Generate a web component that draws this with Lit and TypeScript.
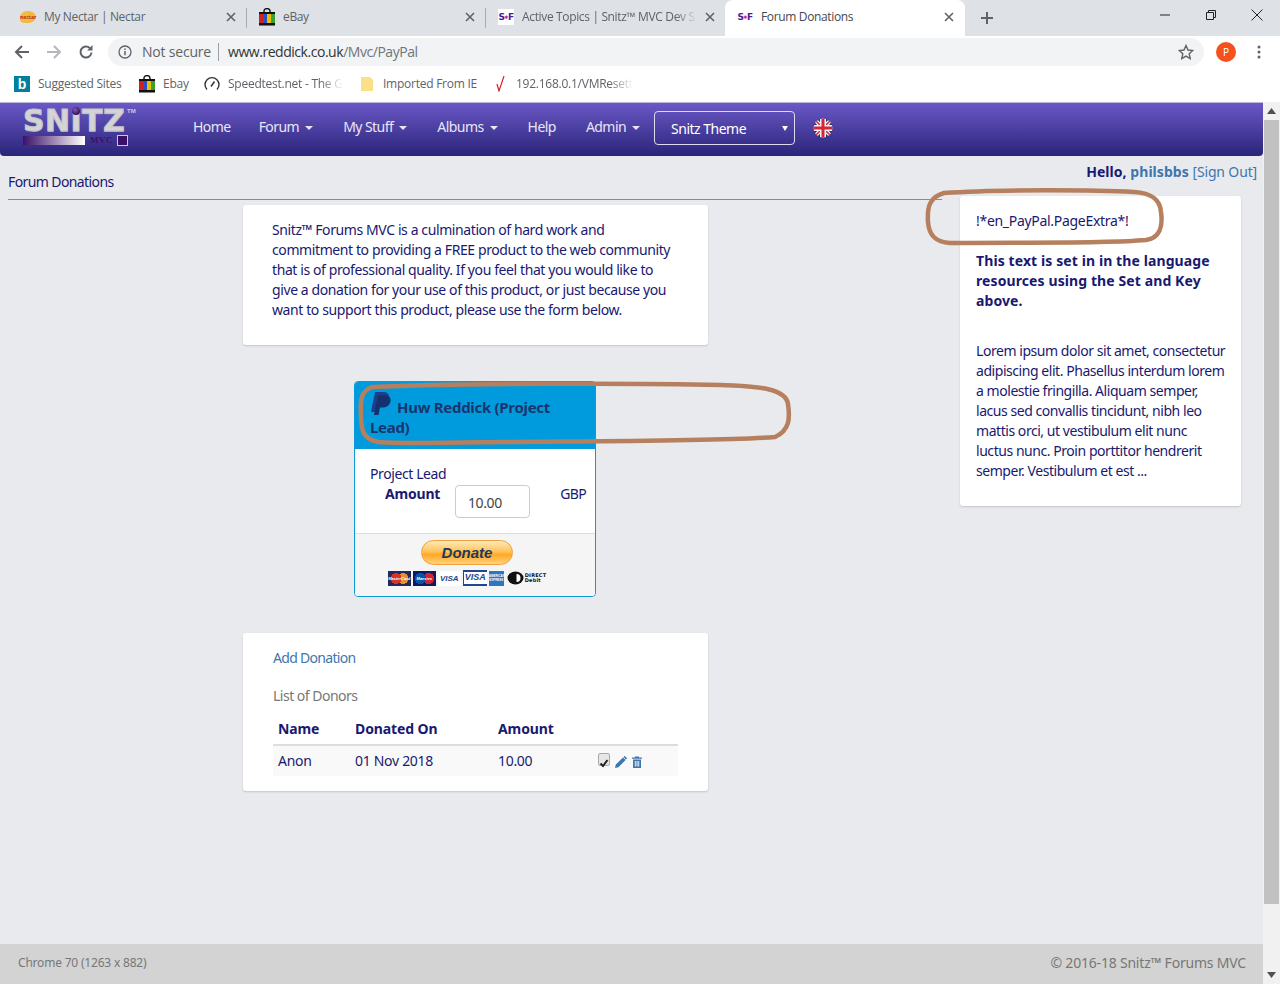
import { LitElement, css, html, svg } from 'lit';
import { customElement } from 'lit/decorators.js';

const closeIcon = html`<svg class="tab-x" width="10" height="10" viewBox="0 0 10 10"><path d="M1 1l8 8M9 1l-8 8" stroke="#5f6368" stroke-width="1.6"/></svg>`;

const bagIcon = html`<svg width="16" height="18" viewBox="0 0 16 18">
  <path d="M5 5V3a3 2.4 0 0 1 6 0v2" fill="none" stroke="#111" stroke-width="1.4"/>
  <rect x="0" y="4" width="16" height="2.5" fill="#111"/>
  <rect x="0" y="6" width="5" height="9" fill="#d02020"/>
  <rect x="5" y="6" width="3" height="9" fill="#2a4fc0"/>
  <rect x="8" y="6" width="4" height="9" fill="#e8c000"/>
  <rect x="12" y="6" width="4" height="9" fill="#3aa030"/>
  <rect x="0" y="15" width="16" height="2.5" fill="#111"/>
</svg>`;

const snitzFavicon = html`<span class="sf-icon">S<i>✱</i>F</span>`;

@customElement('browser-chrome')
export class BrowserChrome extends LitElement {
  static styles = css`
    :host {
      display: block;
      font-family: "Open Sans", "Noto Sans", sans-serif;
      font-size: 12px;
      color: #5f6368;
    }
    .strip {
      height: 36px;
      background: #dee1e6;
      display: flex;
      align-items: center;
      padding-left: 8px;
    }
    .tab {
      width: 238px;
      height: 36px;
      box-sizing: border-box;
      display: flex;
      align-items: center;
      padding: 0 10px 2px 12px;
      gap: 8px;
      flex: none;
    }
    .sep { width: 1px; height: 20px; background: #a8abb0; flex: none; margin-bottom: 1px; }
    .tab.wide { width: 239px; }
    .tab.active {
      width: 240px;
      padding-right: 11px;
      background: #fff;
      border-radius: 8px 8px 0 0;
      color: #45484c;
    }
    .tab .ico { width: 16px; display: flex; justify-content: center; align-items: center; flex: none; }
    .tab .name { flex: 1; white-space: nowrap; overflow: hidden; letter-spacing: -0.35px; }
    .tab .name.fade {
      -webkit-mask-image: linear-gradient(90deg, #000 88%, transparent);
      mask-image: linear-gradient(90deg, #000 88%, transparent);
    }
    .tab-x { flex: none; }
    .nectar {
      width: 16px;
      height: 12px;
      border-radius: 50% 50% 50% 30%;
      background: #f3b83e;
      color: #b5301a;
      font-size: 5px;
      font-weight: 700;
      line-height: 12px;
      text-align: center;
    }
    .sf-icon {
      font-family: "DejaVu Sans", sans-serif;
      font-size: 9px;
      font-weight: 700;
      color: #4a1d96;
      background: #fff;
      width: 16px;
      text-align: center;
      line-height: 16px;
      letter-spacing: -0.6px;
      white-space: nowrap;
    }
    .sf-icon i { font-style: normal; font-size: 5px; color: #c02090; vertical-align: 1px; }
    .plus { margin-left: 15px; height: 14px; flex: none; }
    .win {
      margin-left: auto;
      display: flex;
      height: 30px;
      align-self: flex-start;
    }
    .win span {
      width: 46px;
      display: flex;
      align-items: center;
      justify-content: center;
    }
    .toolbar {
      height: 30px;
      box-sizing: border-box;
      padding-top: 2px;
      background: #fff;
      display: flex;
      align-items: center;
    }
    .nav-btn { width: 16px; height: 16px; flex: none; }
    .nav-group { display: flex; gap: 16px; padding-left: 14px; width: 94px; flex: none; }
    .omni {
      width: 1096px;
      height: 28px;
      box-sizing: border-box;
      background: #f1f3f4;
      border-radius: 14px;
      display: flex;
      align-items: center;
      padding: 0 10px;
      font-size: 14px;
      flex: none;
    }
    .secure { margin-left: 10px; letter-spacing: -0.2px; }
    .divider { width: 1px; height: 18px; background: #9aa0a6; margin: 0 9px 0 7px; }
    .host { color: #333; letter-spacing: -0.46px; }
    .path { color: #70757a; letter-spacing: -0.46px; }
    .star { margin-left: auto; }
    .avatar {
      width: 20px;
      height: 20px;
      border-radius: 50%;
      background: #f4511e;
      color: #fff;
      font-size: 10px;
      line-height: 20px;
      text-align: center;
      margin-left: 12px;
      flex: none;
    }
    .dots { margin-left: 21px; flex: none; }
    .bookmarks {
      height: 36px;
      background: #fff;
      display: flex;
      align-items: center;
      padding-left: 14px;
      box-sizing: border-box;
    }
    .bm { display: flex; align-items: center; white-space: nowrap; flex: none; }
    .bm .ico { width: 16px; height: 16px; display: flex; justify-content: center; align-items: center; flex: none; }
    .bm .lbl { margin-left: 8px; letter-spacing: -0.25px; }
    .w-suggested { width: 125px; }
    .w-ebay { width: 65px; }
    .w-speed { width: 155px; }
    .w-imported { width: 134px; }
    .lbl.imported { margin-left: 8px; }
    .lbl.ip { margin-left: 7px; }
    .bing {
      background: #00809d;
      color: #fff;
      font: 700 14px/16px "Liberation Sans", sans-serif;
      text-align: center;
    }
    .fade-short {
      -webkit-mask-image: linear-gradient(90deg, #000 80%, transparent);
      mask-image: linear-gradient(90deg, #000 80%, transparent);
    }
  `;

  render() {
    return html`
      <div class="strip">
        <div class="tab">
          <span class="ico"><span class="nectar">nectar</span></span>
          <span class="name">My Nectar | Nectar</span>${closeIcon}
        </div>
        <span class="sep"></span>
        <div class="tab">
          <span class="ico">${bagIcon}</span>
          <span class="name">eBay</span>${closeIcon}
        </div>
        <span class="sep"></span>
        <div class="tab wide">
          <span class="ico">${snitzFavicon}</span>
          <span class="name fade">Active Topics | Snitz™ MVC Dev S</span>${closeIcon}
        </div>
        <div class="tab active">
          <span class="ico">${snitzFavicon}</span>
          <span class="name">Forum Donations</span>${closeIcon}
        </div>
        <svg class="plus" width="14" height="14" viewBox="0 0 14 14"><path d="M7 1v12M1 7h12" stroke="#5f6368" stroke-width="2"/></svg>
        <div class="win">
          <span><svg width="10" height="10" viewBox="0 0 10 10"><path d="M0 5h10" stroke="#222" stroke-width="1"/></svg></span>
          <span><svg width="10" height="10" viewBox="0 0 10 10"><path d="M.5 2.5h7v7h-7zM2.5 2.5v-2h7v7h-2" fill="none" stroke="#222"/></svg></span>
          <span><svg width="12" height="12" viewBox="0 0 12 12"><path d="M.5.5l11 11M11.500.5l-11 11" stroke="#222"/></svg></span>
        </div>
      </div>
      <div class="toolbar">
        <div class="nav-group">
          <svg class="nav-btn" viewBox="0 0 16 16"><path d="M15 8H2M8 2L2 8l6 6" fill="none" stroke="#5f6368" stroke-width="2"/></svg>
          <svg class="nav-btn" viewBox="0 0 16 16"><path d="M1 8h13M8 2l6 6-6 6" fill="none" stroke="#b4b7bb" stroke-width="2"/></svg>
          <svg class="nav-btn" viewBox="0 0 16 16"><path d="M13.500 8.500a5.500 5.500 0 1 1-1.600-4.400" fill="none" stroke="#5f6368" stroke-width="2"/><path d="M14.500 1v5.500H9z" fill="#5f6368"/></svg>
        </div>
        <div class="omni">
          <svg width="14" height="14" viewBox="0 0 14 14"><circle cx="7" cy="7" r="6" fill="none" stroke="#5f6368" stroke-width="1.300"/><path d="M7 6v4.200M7 3.500v1.500" stroke="#5f6368" stroke-width="1.500"/></svg>
          <span class="secure">Not secure</span>
          <span class="divider"></span>
          <span class="host">www.reddick.co.uk</span><span class="path">/Mvc/PayPal</span>
          <svg class="star" width="16" height="16" viewBox="0 0 16 16"><path d="M8 1.500l2 4.500 4.800.5-3.600 3.200 1 4.800L8 12.100l-4.200 2.400 1-4.800L1.200 6.500 6 6z" fill="none" stroke="#5f6368" stroke-width="1.400"/></svg>
        </div>
        <span class="avatar">P</span>
        <svg class="dots" width="4" height="14" viewBox="0 0 4 14"><circle cx="2" cy="2" r="1.500" fill="#5f6368"/><circle cx="2" cy="7" r="1.500" fill="#5f6368"/><circle cx="2" cy="12" r="1.500" fill="#5f6368"/></svg>
      </div>
      <div class="bookmarks">
        <div class="bm w-suggested"><span class="ico bing">b</span><span class="lbl">Suggested Sites</span></div>
        <div class="bm w-ebay"><span class="ico">${bagIcon}</span><span class="lbl">Ebay</span></div>
        <div class="bm w-speed">
          <span class="ico"><svg width="16" height="16" viewBox="0 0 16 16"><path d="M3 13.500a7 7 0 1 1 10 0" fill="none" stroke="#333" stroke-width="1.400"/><path d="M7 10.500l3.500-5" stroke="#333" stroke-width="1.500"/></svg></span>
          <span class="lbl fade-short">Speedtest.net - The G</span>
        </div>
        <div class="bm w-imported">
          <span class="ico"><svg width="12" height="14" viewBox="0 0 12 14"><path d="M0 0h9l3 3v11H0z" fill="#fbe08a"/></svg></span>
          <span class="lbl imported">Imported From IE</span>
        </div>
        <div class="bm">
          <span class="ico"><svg width="12" height="16" viewBox="0 0 12 16"><path d="M2 8l2 7 5-15" fill="none" stroke="#d8222a" stroke-width="1.200"/></svg></span>
          <span class="lbl ip fade-short">192.168.0.1/VMResett</span>
        </div>
      </div>
    `;
  }
}

const marks = svg`
  <path d="M944 193C1000 189 1100 190 1134 192C1150 193 1160 198 1161 212C1163 226 1160 238 1146 240C1100 244 1000 242 950 243C936 242 929 236 928 222C927 206 930 197 944 193Z"/>
  <path d="M372 387C460 383 640 383 720 385C760 386 786 389 788 404C790 418 790 430 775 437C720 441 600 441 500 442C440 443 400 444 378 442C364 439 361 432 361 415C360 400 361 391 372 387Z"/>
`;

@customElement('app-root')
export class AppRoot extends LitElement {
  static styles = css`
    :host {
      display: block;
      position: relative;
      width: 1280px;
      height: 984px;
      overflow: hidden;
      font-family: "Noto Sans", "DejaVu Sans", sans-serif;
      font-size: 14px;
      line-height: 20px;
      color: #191970;
      background: #e9eaee;
    }
    .page { display: flex; height: 882px; }
    .content { width: 1263px; display: flex; flex-direction: column; }
    .scrollbar {
      width: 17px;
      background: #f1f1f1;
      display: flex;
      flex-direction: column;
      align-items: center;
    }
    .scrollbar .arrow { height: 18px; display: flex; align-items: center; justify-content: center; flex: none; }
    .scrollbar .thumb { width: 15px; flex: 1; background: #c1c1c1; margin-bottom: 62px; }
    .navbar {
      height: 54px;
      flex: none;
      border-top: 1px solid #b9b7d6;
      box-sizing: border-box;
      background: linear-gradient(#6a58c6, #2a2479);
      border-radius: 0 0 4px 4px;
      display: flex;
      align-items: center;
      padding-bottom: 4px;
      color: #e8e6f6;
    }
    .logo {
      width: 178px;
      padding-left: 23px;
      height: 46px;
      box-sizing: border-box;
      flex: none;
      position: relative;
      margin-top: 4px;
    }
    .logo-word {
      font: 700 30px/28px "DejaVu Sans", sans-serif;
      letter-spacing: 0.4px;
      color: #d4d4d6;
      -webkit-text-stroke: 1px #c4c4c8;
      text-shadow: 0 1px 0 #8f8fa0;
      display: block;
      height: 28px;
      margin-bottom: 1px;
    }
    .logo-dot {
      position: absolute;
      left: 72px;
      top: 0;
      width: 8px;
      height: 8px;
      border-radius: 50%;
      background: radial-gradient(circle at 40% 35%, #8a5ab0, #34105c 70%);
    }
    .logo-tm { position: absolute; left: 127px; top: 0; font: 700 6px/8px "Liberation Sans", sans-serif; color: #ccc; }
    .logo-bar { display: flex; align-items: center; width: 104px; height: 9px; }
    .logo-fade { width: 62px; height: 9px; background: linear-gradient(90deg, #3c1068, #fff); }
    .logo-mvc { flex: 1; text-align: center; font: 700 9px/9px "Liberation Serif", serif; color: #3c1068; letter-spacing: 0.5px; }
    .logo-sq { width: 9px; height: 9px; background: #3c1068; outline: 1px solid #c8c8d8; }
    .menu { display: flex; margin-bottom: 2px; }
    .menu a { padding: 0 15px; white-space: nowrap; letter-spacing: -0.55px; }
    .menu a.home { padding-right: 13px; }
    .menu a.drop::after {
      content: "";
      display: inline-block;
      margin-left: 6px;
      vertical-align: 2px;
      border-top: 4px solid #e8e6f6;
      border-left: 4px solid transparent;
      border-right: 4px solid transparent;
    }
    .theme {
      width: 141px;
      height: 34px;
      margin-left: -1px;
      box-sizing: border-box;
      border: 1px solid #dcdaf0;
      border-radius: 4px;
      display: flex;
      align-items: center;
      justify-content: space-between;
      padding: 2px 6px 0 16px;
      color: #fff;
      letter-spacing: -0.5px;
      flex: none;
    }
    .theme::after {
      content: "";
      border-top: 5px solid #fff;
      border-left: 3px solid transparent;
      border-right: 3px solid transparent;
    }
    .flag { margin-left: 18px; flex: none; }
    .main { flex: 1; display: grid; grid-template-columns: 942px 321px; }
    .left { padding: 16px 0 0 8px; display: flex; flex-direction: column; }
    .crumb { letter-spacing: -0.6px; height: 20px; }
    .rule { height: 1px; background: #8b8b8f; margin-top: 7px; flex: none; }
    .stack {
      margin-top: 5px;
      display: flex;
      flex-direction: column;
      align-items: center;
      gap: 36px;
    }
    .card {
      background: #fff;
      border-radius: 3px;
      box-shadow: 0 1px 2px rgba(0, 0, 0, 0.16);
      box-sizing: border-box;
    }
    .intro { width: 465px; margin-left: 1px; height: 140px; padding: 15px 30px 25px 29px; letter-spacing: -0.4px; white-space: nowrap; }
    .paypal {
      width: 242px;
      height: 216px;
      border: 1px solid #0d9ad6;
      border-radius: 4px;
      overflow: hidden;
      background: #fff;
      box-sizing: border-box;
      display: flex;
      flex-direction: column;
    }
    .pp-head {
      height: 67px;
      flex: none;
      background: #009bdd;
      padding: 10px 15px 0;
      box-sizing: border-box;
      color: #19346e;
      font-weight: 700;
      font-size: 15px;
      letter-spacing: -0.3px;
      white-space: nowrap;
    }
    .pp-logo { vertical-align: -3px; margin-right: 5px; }
    .pp-body { flex: 1; padding: 15px 9px 0 15px; letter-spacing: -0.4px; }
    .pp-row { display: flex; }
    .pp-amount { font-weight: 700; width: 85px; padding-left: 15px; box-sizing: border-box; letter-spacing: -0.2px; }
    .pp-input {
      width: 75px;
      height: 33px;
      margin-top: 1px;
      box-sizing: border-box;
      border: 1px solid #ccc;
      border-radius: 4px;
      padding: 7px 12px 0;
      color: #444;
      flex: none;
    }
    .pp-gbp { margin-left: auto; letter-spacing: -0.7px; }
    .pp-foot {
      height: 63px;
      flex: none;
      box-sizing: border-box;
      background: #f5f5f5;
      border-top: 1px solid #ddd;
      display: flex;
      flex-direction: column;
      align-items: center;
      padding-top: 6px;
    }
    .donate {
      width: 92px;
      height: 25px;
      margin-left: -16px;
      box-sizing: border-box;
      border: 1px solid #f0a13c;
      border-radius: 13px;
      background: linear-gradient(#ffe9b8 0%, #ffc45c 45%, #ffa928 60%, #ffd27d 100%);
      text-align: center;
      font: italic 700 15px/23px "Liberation Sans", sans-serif;
      color: #1c3a5c;
    }
    .cards { display: flex; align-items: center; gap: 2px; margin-top: 5px; margin-left: -16px; height: 16px; }
    .pc {
      height: 15px;
      width: 23px;
      font: italic 700 5px/15px "Liberation Sans", sans-serif;
      text-align: center;
      white-space: nowrap;
      overflow: hidden;
      color: #fff;
    }
    .pc.mc { background: radial-gradient(circle at 35% 50%, #d0342c 0 32%, transparent 33%), radial-gradient(circle at 65% 50%, #e88f2e 0 32%, transparent 33%), #1f2a5c; font-size: 4px; }
    .pc.ma { background: radial-gradient(circle at 32% 50%, #0a54a8 0 32%, transparent 33%), radial-gradient(circle at 68% 50%, #d0242c 0 32%, transparent 33%), #0b1d60; font-size: 4px; }
    .pc.v1 { background: #fff; color: #21468e; font-size: 8px; }
    .pc.v2 {
      background: #fff;
      color: #21468e;
      font-size: 9px;
      height: 16px;
      border-top: 2px solid #21468e;
      border-left: 1px solid #21468e;
      border-bottom: 2px solid #21468e;
      box-sizing: border-box;
      line-height: 11px;
      width: 24px;
    }
    .pc.ax { background: #2e77bb; width: 15px; font-size: 3px; line-height: 4px; padding-top: 3px; box-sizing: border-box; font-style: normal; white-space: normal; }
    .dd { display: flex; align-items: center; margin-left: 1px; }
    .dd-text { font: 700 5px/5px "DejaVu Sans", sans-serif; color: #111; margin-left: 1px; letter-spacing: 0.2px; }
    .donors { width: 465px; margin-left: 1px; height: 158px; padding: 15px 30px 0; }
    .add { color: #3f76ad; letter-spacing: -0.7px; }
    .list-title { color: #777; margin-top: 18px; letter-spacing: -0.5px; }
    table { border-collapse: collapse; width: 405px; margin-top: 13px; }
    th {
      text-align: left;
      font-weight: 700;
      padding: 0 5px 5px;
      height: 20px;
      border-bottom: 2px solid #ddd;
      letter-spacing: -0.1px;
    }
    td { padding: 5px; height: 20px; background: #f9f9f9; letter-spacing: -0.3px; }
    .c1 { width: 67px; }
    .c2 { width: 133px; }
    .c3 { width: 90px; }
    .acts { display: flex; align-items: center; gap: 5px; padding-top: 1px; }
    .check {
      width: 12px;
      height: 13px;
      margin-top: -4px;
      border: 1px solid #aaa;
      border-radius: 2px;
      background: #e6e6e6;
      box-sizing: border-box;
      display: block;
      flex: none;
    }
    .right { display: flex; flex-direction: column; }
    .hello { height: 40px; padding: 6px 6px 0 0; box-sizing: border-box; text-align: right; white-space: nowrap; }
    .hello b { letter-spacing: 0.05px; }
    .hello a { color: #3f76ad; }
    .hello .out { letter-spacing: -0.15px; }
    .extra {
      margin-left: 18px;
      width: 281px;
      height: 310px;
      padding: 15px 15px 0 16px;
      white-space: nowrap;
      letter-spacing: -0.3px;
    }
    .extra .strong { font-weight: 700; margin-top: 20px; letter-spacing: 0.1px; }
    .extra .lorem { margin-top: 30px; letter-spacing: -0.45px; }
    .footer {
      height: 40px;
      flex: none;
      background: #d3d3d3;
      color: #777;
      display: flex;
      justify-content: space-between;
      align-items: center;
      padding: 0 17px 2px 18px;
      letter-spacing: -0.2px;
      box-sizing: border-box;
    }
    .footer .ver { font-size: 12px; }
    .marks { position: absolute; left: 0; top: 0; pointer-events: none; }
    .marks path { fill: none; stroke: #b67f5e; stroke-width: 4.5; }
  `;

  render() {
    return html`
      <browser-chrome></browser-chrome>
      <div class="page">
        <div class="content">
          <div class="navbar">
            <div class="logo">
              <span class="logo-word">SNITZ</span>
              <span class="logo-dot"></span>
              <span class="logo-tm">TM</span>
              <div class="logo-bar">
                <span class="logo-fade"></span><span class="logo-mvc">MVC</span><span class="logo-sq"></span>
              </div>
            </div>
            <nav class="menu">
              <a class="home">Home</a><a class="drop">Forum</a><a class="drop">My Stuff</a><a class="drop">Albums</a><a>Help</a><a class="drop">Admin</a>
            </nav>
            <div class="theme">Snitz Theme</div>
            <svg class="flag" width="20" height="20" viewBox="0 0 20 20">
              <defs><clipPath id="round"><circle cx="10" cy="10" r="9.500"/></clipPath></defs>
              <g clip-path="url(#round)">
                <rect width="20" height="20" fill="#23307a"/>
                <path d="M0 0l20 20M20 0L0 20" stroke="#f4f4f4" stroke-width="4"/>
                <path d="M0 0l20 20M20 0L0 20" stroke="#d02838" stroke-width="1.500"/>
                <path d="M10 0v20M0 10h20" stroke="#f4f4f4" stroke-width="6"/>
                <path d="M10 0v20M0 10h20" stroke="#d02838" stroke-width="3"/>
              </g>
            </svg>
          </div>
          <div class="main">
            <div class="left">
              <div class="crumb">Forum Donations</div>
              <div class="rule"></div>
              <div class="stack">
                <div class="card intro">
                  Snitz™ Forums MVC is a culmination of hard work and<br>
                  commitment to providing a FREE product to the web community<br>
                  that is of professional quality. If you feel that you would like to<br>
                  give a donation for your use of this product, or just because you<br>
                  want to support this product, please use the form below.
                </div>
                <div class="paypal">
                  <div class="pp-head">
                    <svg class="pp-logo" width="22" height="24" viewBox="0 0 22 24">
                      <path d="M5 0h8c4 0 6.500 2 6 5.500C18.400 10 15 12.500 10.500 12.500H7.500L6 20H1z" fill="#1a3f8c"/>
                      <path d="M8 3.500h7c3.500 0 6 1.800 5.600 5.200C20 13 17 15.500 12.500 15.500h-2.600L8.600 23H4z" fill="#14306e"/>
                    </svg>Huw Reddick (Project<br>Lead)
                  </div>
                  <div class="pp-body">
                    <div>Project Lead</div>
                    <div class="pp-row">
                      <div class="pp-amount">Amount</div>
                      <div class="pp-input">10.00</div>
                      <div class="pp-gbp">GBP</div>
                    </div>
                  </div>
                  <div class="pp-foot">
                    <div class="donate">Donate</div>
                    <div class="cards">
                      <span class="pc mc">MasterCard</span>
                      <span class="pc ma">Maestro</span>
                      <span class="pc v1">VISA</span>
                      <span class="pc v2">VISA</span>
                      <span class="pc ax">AMERICAN EXPRESS</span>
                      <span class="dd">
                        <svg width="17" height="14" viewBox="0 0 17 14"><ellipse cx="8.500" cy="7" rx="8" ry="6.500" fill="#111"/><path d="M9.500 3a4 4 0 1 1 0 8z" fill="#fff"/></svg>
                        <span class="dd-text">DIRECT<br>Debit</span>
                      </span>
                    </div>
                  </div>
                </div>
                <div class="card donors">
                  <div class="add">Add Donation</div>
                  <div class="list-title">List of Donors</div>
                  <table>
                    <thead>
                      <tr><th class="c1">Name</th><th class="c2">Donated On</th><th class="c3">Amount</th><th></th></tr>
                    </thead>
                    <tbody>
                      <tr>
                        <td>Anon</td><td>01 Nov 2018</td><td>10.00</td>
                        <td>
                          <div class="acts">
                            <span class="check"><svg width="10" height="11" viewBox="0 0 10 11"><path d="M1.500 5.500l2.500 2.500 4.500-6" fill="none" stroke="#222" stroke-width="2"/></svg></span>
                            <svg width="12" height="12" viewBox="0 0 12 12"><path d="M0 12l.8-3.400L8 1.400 10.600 4 3.400 11.200zM9 .4l.7-.4 2.300 2.300-.4.700L11 3.500 8.500 1z" fill="#3f76ad"/></svg>
                            <svg width="10" height="12" viewBox="0 0 10 12"><path d="M0 1.500h3V.5h4v1h3v1.200H0zM1 3.500h8V12H1zM2.800 5v5.500h.9V5zM4.600 5v5.500h.9V5zM6.300 5v5.500h.9V5z" fill-rule="evenodd" fill="#3f76ad"/></svg>
                          </div>
                        </td>
                      </tr>
                    </tbody>
                  </table>
                </div>
              </div>
            </div>
            <div class="right">
              <div class="hello"><b>Hello, <a>philsbbs</a></b> <a class="out">[Sign Out]</a></div>
              <div class="card extra">
                <div>!*en_PayPal.PageExtra*!</div>
                <div class="strong">This text is set in in the language<br>resources using the Set and Key<br>above.</div>
                <div class="lorem">
                  Lorem ipsum dolor sit amet, consectetur<br>
                  adipiscing elit. Phasellus interdum lorem<br>
                  a molestie fringilla. Aliquam semper,<br>
                  lacus sed convallis tincidunt, nibh leo<br>
                  mattis orci, ut vestibulum elit nunc<br>
                  luctus nunc. Proin porttitor hendrerit<br>
                  semper. Vestibulum et est ...
                </div>
              </div>
            </div>
          </div>
          <div class="footer">
            <span class="ver">Chrome 70 (1263 x 882)</span>
            <span>© 2016-18 Snitz™ Forums MVC</span>
          </div>
        </div>
        <div class="scrollbar">
          <span class="arrow"><svg width="9" height="6" viewBox="0 0 9 6"><path d="M4.500 0L9 6H0z" fill="#505050"/></svg></span>
          <span class="thumb"></span>
          <span class="arrow"><svg width="9" height="6" viewBox="0 0 9 6"><path d="M4.500 6L9 0H0z" fill="#505050"/></svg></span>
        </div>
      </div>
      <svg class="marks" width="1280" height="984" viewBox="0 0 1280 984">${marks}</svg>
    `;
  }
}
